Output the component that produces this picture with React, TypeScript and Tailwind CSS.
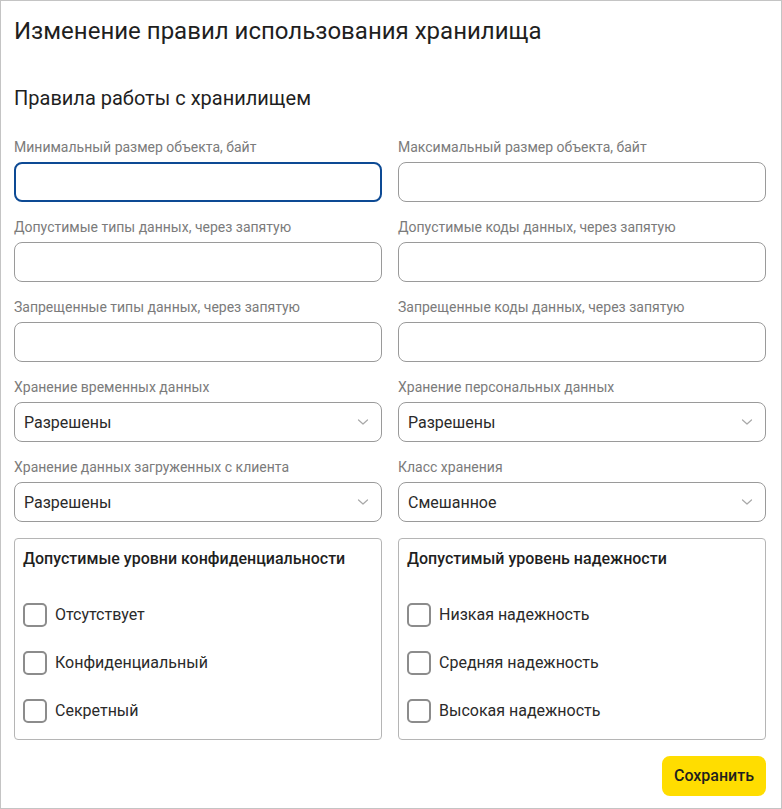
import React from "react";

const font = { fontFamily: "Roboto, 'Noto Sans', sans-serif" };

function Label({ children }: { children: React.ReactNode }) {
  return <div className="h-5 text-[14px] leading-5 text-[#7b7b7b] mb-[5px] whitespace-nowrap">{children}</div>;
}

function Input({ focused }: { focused?: boolean }) {
  return (
    <div
      className={
        focused
          ? "h-10 rounded-lg border-2 border-[#0d4a94] bg-white"
          : "h-10 rounded-lg border border-[#9a9a9a] bg-white"
      }
    />
  );
}

function Select({ value }: { value: string }) {
  return (
    <div className="h-10 rounded-lg border border-[#9a9a9a] bg-white flex items-center justify-between pl-[9px] pr-[12px]">
      <span className="text-[16px] leading-5 pt-px text-[#2a2a2a]">{value}</span>
      <svg width="12" height="8" viewBox="0 0 12 8" fill="none">
        <path d="M1.5 2 L6 6 L10.5 2" stroke="#a8a8a8" strokeWidth="1.2" strokeLinecap="round" strokeLinejoin="round" />
      </svg>
    </div>
  );
}

function Field({ label, children }: { label: string; children: React.ReactNode }) {
  return (
    <div className="flex flex-col pb-[15px]">
      <Label>{label}</Label>
      {children}
    </div>
  );
}

function CheckRow({ label }: { label: string }) {
  return (
    <div className="h-12 flex items-center gap-2">
      <div className="w-6 h-6 rounded-[5px] border-2 border-[#8c8c8c] bg-white shrink-0" />
      <span className="text-[16px] text-[#2a2a2a]">{label}</span>
    </div>
  );
}

function CheckBox({ title, items }: { title: string; items: string[] }) {
  return (
    <div className="h-[202px] rounded border border-[#b5b5b5] px-2 pt-[10px]">
      <div className="text-[16px] leading-5 font-medium text-[#1f1f1f] mb-[22px]">{title}</div>
      {items.map((i) => (
        <CheckRow key={i} label={i} />
      ))}
    </div>
  );
}

export default function App() {
  return (
    <div style={font} className="w-[782px] h-[809px] border border-[#c4c4c4] bg-white pl-[13px] pr-[15px] pt-[16px] flex flex-col">
      <div className="text-[24px] leading-7 text-[#1f1f1f]">Изменение правил использования хранилища</div>
      <div className="text-[20px] leading-6 text-[#1f1f1f] mt-[41px] mb-[27px]">Правила работы с хранилищем</div>
      <div className="grid grid-cols-2 gap-x-4">
        <Field label="Минимальный размер объекта, байт"><Input focused /></Field>
        <Field label="Максимальный размер объекта, байт"><Input /></Field>
        <Field label="Допустимые типы данных, через запятую"><Input /></Field>
        <Field label="Допустимые коды данных, через запятую"><Input /></Field>
        <Field label="Запрещенные типы данных, через запятую"><Input /></Field>
        <Field label="Запрещенные коды данных, через запятую"><Input /></Field>
        <Field label="Хранение временных данных"><Select value="Разрешены" /></Field>
        <Field label="Хранение персональных данных"><Select value="Разрешены" /></Field>
        <Field label="Хранение данных загруженных с клиента"><Select value="Разрешены" /></Field>
        <Field label="Класс хранения"><Select value="Смешанное" /></Field>
      </div>
      <div className="grid grid-cols-2 gap-x-4 mt-px">
        <CheckBox title="Допустимые уровни конфиденциальности" items={["Отсутствует", "Конфиденциальный", "Секретный"]} />
        <CheckBox title="Допустимый уровень надежности" items={["Низкая надежность", "Средняя надежность", "Высокая надежность"]} />
      </div>
      <div className="flex justify-end mt-4">
        <button className="w-[104px] h-10 rounded-lg bg-[#ffdd00] text-[16px] font-medium text-[#1f1f1f]">Сохранить</button>
      </div>
    </div>
  );
}
